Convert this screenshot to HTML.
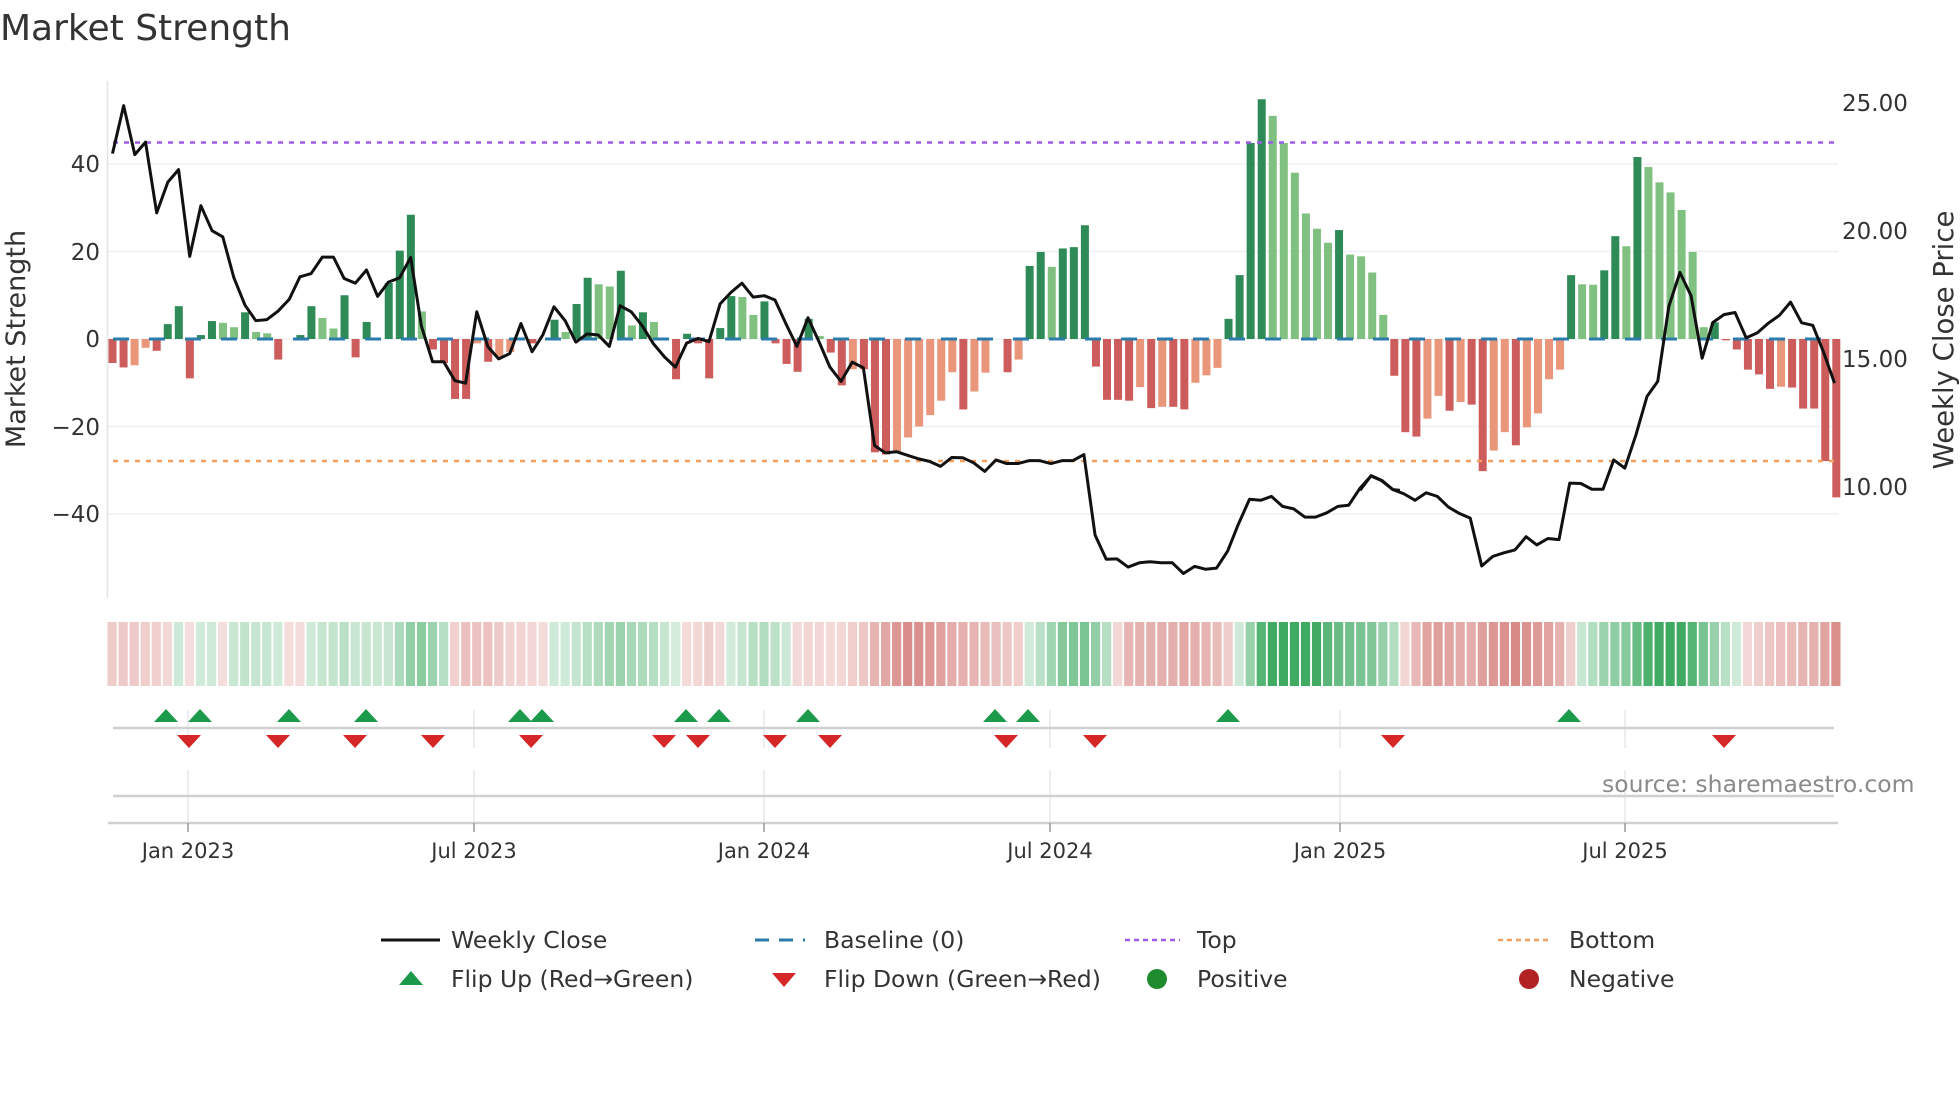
<!DOCTYPE html>
<html><head><meta charset="utf-8"><style>
html,body{margin:0;padding:0;background:#fff;}
svg{display:block;font-family:"DejaVu Sans","Liberation Sans",sans-serif;}
</style></head><body>
<svg id="s" width="1960" height="1102" viewBox="0 0 1960 1102" xmlns="http://www.w3.org/2000/svg">
<text x="0" y="40" font-size="36" fill="#333">Market Strength</text>
<g stroke="#eef0f3" stroke-width="1.5">
<line x1="108" y1="164" x2="1838" y2="164"/><line x1="108" y1="251.5" x2="1838" y2="251.5"/><line x1="108" y1="339" x2="1838" y2="339"/><line x1="108" y1="426.5" x2="1838" y2="426.5"/><line x1="108" y1="514" x2="1838" y2="514"/>
</g>
<line x1="107.5" y1="81" x2="107.5" y2="598" stroke="#e4e4e4" stroke-width="1.5"/>
<g font-size="23" fill="#333" text-anchor="end">
<text x="100" y="172">40</text><text x="100" y="260">20</text><text x="100" y="347">0</text><text x="100" y="435">−20</text><text x="100" y="522">−40</text>
</g>
<text transform="translate(25,339) rotate(-90)" font-size="27" fill="#333" text-anchor="middle">Market Strength</text>
<g font-size="23" fill="#333">
<text x="1842" y="111">25.00</text><text x="1842" y="239">20.00</text><text x="1842" y="367">15.00</text><text x="1842" y="495">10.00</text>
</g>
<text transform="translate(1953,340) rotate(-90)" font-size="27.5" fill="#333" text-anchor="middle">Weekly Close Price</text>
<g id="bars"></g>
<line x1="113" y1="339" x2="1836" y2="339" stroke="#2b7bab" stroke-width="3" stroke-dasharray="16 20"/>
<line x1="113" y1="142.5" x2="1836" y2="142.5" stroke="#9b5de5" stroke-width="2.5" stroke-dasharray="5 6"/>
<line x1="113" y1="461" x2="1836" y2="461" stroke="#f0a060" stroke-width="2.5" stroke-dasharray="5 6"/>
<g fill="none" stroke="#111" stroke-width="3" stroke-linejoin="round">
<polyline transform="translate(0,60) scale(0.4464,0.3571)" vector-effect="non-scaling-stroke" points="252,262 277,128 302,265 326,230 351,428 376,342 400,307 425,550 450,408 475,478 499,495 524,610 549,687 573,730 598,727 623,703 648,670 672,607 697,598 722,552 747,552 771,612 796,625 821,588 846,662 870,622 895,610 920,553 944,745 969,845 994,845 1019,898 1043,905 1068,705 1093,803 1117,837 1142,822 1167,738 1192,817 1216,770 1241,691 1266,730 1290,790 1315,767 1340,770 1365,802 1389,688 1414,705 1439,745 1464,795 1489,832 1513,860 1538,793 1563,780 1568,781"/>
<polyline transform="translate(700,60) scale(0.4464,0.3571)" vector-effect="non-scaling-stroke" points="0,781 20,789 45,683 70,650 94,625 119,664 144,660 168,672 193,740 217,802 242,722 267,790 291,860 316,900 341,846 366,862 391,1080 415,1100 440,1097 465,1107 490,1117 514,1124 539,1138 564,1113 589,1114 613,1128 638,1152 663,1120 687,1130 712,1130 737,1122 761,1122 786,1130 811,1122 835,1122 860,1105 885,1330 910,1398 934,1397 959,1420 984,1408 1008,1405 1033,1408 1058,1408 1083,1438 1108,1418 1132,1426 1157,1423 1182,1375 1206,1300 1231,1230 1256,1233 1280,1222 1305,1250 1330,1257 1355,1280 1379,1280 1404,1268 1429,1250 1453,1247 1478,1200 1503,1165 1527,1178 1552,1203 1568,1205"/>
<polyline transform="translate(1360,60) scale(0.3827,0.3571)" vector-effect="non-scaling-stroke" points="0,1205 29,1164 58,1178 86,1203 115,1215 144,1233 173,1212 202,1222 231,1252 260,1270 288,1283 318,1417 347,1390 376,1380 405,1372 434,1335 462,1358 491,1340 520,1343 548,1185 577,1186 606,1202 635,1202 663,1120 692,1143 721,1050 750,942 778,900 807,690 836,595 865,660 894,835 922,735 951,713 980,707 1009,778 1038,764 1067,737 1096,715 1125,678 1154,736 1183,743 1212,820 1240,905"/>
</g>
<g id="heat"></g>
<g stroke="#e6e8ec" stroke-width="1.5">
<line x1="188" y1="710" x2="188" y2="748"/><line x1="474" y1="710" x2="474" y2="748"/><line x1="764" y1="710" x2="764" y2="748"/><line x1="1050" y1="710" x2="1050" y2="748"/><line x1="1340" y1="710" x2="1340" y2="748"/><line x1="1625" y1="710" x2="1625" y2="748"/>
<line x1="188" y1="770" x2="188" y2="822"/><line x1="474" y1="770" x2="474" y2="822"/><line x1="764" y1="770" x2="764" y2="822"/><line x1="1050" y1="770" x2="1050" y2="822"/><line x1="1340" y1="770" x2="1340" y2="822"/><line x1="1625" y1="770" x2="1625" y2="822"/>
</g>
<line x1="113" y1="728" x2="1834" y2="728" stroke="#d0d0d0" stroke-width="2.5"/>
<line x1="113" y1="796" x2="1834" y2="796" stroke="#d0d0d0" stroke-width="2.5"/>
<line x1="108" y1="823" x2="1838" y2="823" stroke="#d0d0d0" stroke-width="2.5"/>
<g stroke="#999" stroke-width="1.5">
<line x1="188" y1="823" x2="188" y2="832"/><line x1="474" y1="823" x2="474" y2="832"/><line x1="764" y1="823" x2="764" y2="832"/><line x1="1050" y1="823" x2="1050" y2="832"/><line x1="1340" y1="823" x2="1340" y2="832"/><line x1="1625" y1="823" x2="1625" y2="832"/>
</g>
<g id="marks"></g>
<g font-size="21" fill="#333" text-anchor="middle">
<text x="188" y="858">Jan 2023</text><text x="474" y="858">Jul 2023</text><text x="764" y="858">Jan 2024</text><text x="1050" y="858">Jul 2024</text><text x="1340" y="858">Jan 2025</text><text x="1625" y="858">Jul 2025</text>
</g>
<text x="1602" y="792" font-size="23.5" fill="#8a8a8a">source: sharemaestro.com</text>
<g font-size="23.5" fill="#333">
<line x1="381" y1="940" x2="440" y2="940" stroke="#111" stroke-width="3"/>
<text x="451" y="948">Weekly Close</text>
<line x1="755" y1="940" x2="805" y2="940" stroke="#2b7bab" stroke-width="3" stroke-dasharray="14 10"/>
<text x="824" y="948">Baseline (0)</text>
<line x1="1125" y1="940" x2="1180" y2="940" stroke="#9b5de5" stroke-width="2.5" stroke-dasharray="5 4"/>
<text x="1197" y="948">Top</text>
<line x1="1498" y1="940" x2="1552" y2="940" stroke="#f0a060" stroke-width="2.5" stroke-dasharray="5 4"/>
<text x="1569" y="948">Bottom</text>
<polygon points="399,985 423,985 411,971" fill="#1a9a4a"/>
<text x="451" y="987">Flip Up (Red→Green)</text>
<polygon points="772,973 796,973 784,987" fill="#d62728"/>
<text x="824" y="987">Flip Down (Green→Red)</text>
<circle cx="1157" cy="979" r="10" fill="#1e8c2e"/>
<text x="1197" y="987">Positive</text>
<circle cx="1529" cy="979" r="10" fill="#b22222"/>
<text x="1569" y="987">Negative</text>
</g>
</svg>
<script>
var V=[-5.5,-6.5,-6,-2,-2.7,3.4,7.5,-9,0.9,4.1,3.7,2.7,6.1,1.6,1.3,-4.7,0,0.9,7.5,4.8,2.4,10,-4.2,3.9,0,12.8,20.2,28.4,6.3,-2.4,-5.5,-13.7,-13.7,-1,-5.2,-4,-3,0,-1,0,4.4,1.6,8,14,12.5,12,15.6,3.1,6.1,3.9,0,-9.2,1.2,-1,-9,2.5,9.8,9.6,5.5,8.6,-1,-5.7,-7.5,4.6,0.7,-3.1,-10.6,-6.9,-6.9,-25.9,-26.4,-25.7,-22.5,-20,-17.4,-14.1,-7.6,-16.1,-12,-7.7,0,-7.6,-4.7,16.7,19.9,16.5,20.7,21,26,-6.3,-13.9,-13.9,-14.1,-11,-15.8,-15.5,-15.5,-16.1,-10,-8.3,-6.6,4.6,14.6,44.8,54.8,51,44.8,38,28.7,25.2,22,24.9,19.3,18.9,15.2,5.5,-8.4,-21.3,-22.3,-18.2,-13,-16.4,-14.4,-15,-30.2,-25.5,-21.3,-24.3,-20.2,-17,-9.2,-7,14.6,12.5,12.4,15.7,23.5,21.2,41.6,39.3,35.8,33.5,29.5,19.9,2.7,3.8,-0.3,-2.4,-7,-8.1,-11.4,-10.9,-11.1,-15.9,-15.9,-27.9,-36.2];
var NS="http://www.w3.org/2000/svg";
function el(t,a,p){var e=document.createElementNS(NS,t);for(var k in a)e.setAttribute(k,a[k]);p.appendChild(e);return e;}
var bars=document.getElementById('bars'),heat=document.getElementById('heat'),marks=document.getElementById('marks');
function mix(c,t){return 'rgb('+[0,1,2].map(function(i){return Math.round(255+(c[i]-255)*t)}).join(',')+')';}
for(var i=0;i<V.length;i++){
 var v=V[i],x=112.5+11.05*i,h=Math.abs(v)*4.375;
 var prev=i>0?V[i-1]:0;
 var col;
 if(v>=0){col=(v>=prev)?'#2e8b57':'#80c080';}
 else{col=(v<=prev)?'#cd5c5c':'#e9967a';}
 if(h>0.3) el('rect',{x:x-4,y:v>=0?339-h:339,width:8,height:h,fill:col},bars);
 var s=0,n=0;for(var j=Math.max(0,i-3);j<=i;j++){s+=V[j];n++;}s/=n;
 var t=Math.min(0.9,0.2+Math.abs(s)/50);
 var c=s>=0?mix([40,160,80],t):mix([200,90,85],t);
 el('rect',{x:x-5,y:622,width:9.2,height:64,fill:c},heat);
}
var up=[166,200,289,366,520,542,686,719,808,995,1028,1228,1569],dn=[189,278,355,433,531,664,698,775,830,1006,1095,1393,1724];
up.forEach(function(x){el('polygon',{points:(x-12)+',722 '+(x+12)+',722 '+x+',709',fill:'#1a9a4a'},marks);});
dn.forEach(function(x){el('polygon',{points:(x-12)+',735 '+(x+12)+',735 '+x+',748',fill:'#d62728'},marks);});
</script>
</body></html>
